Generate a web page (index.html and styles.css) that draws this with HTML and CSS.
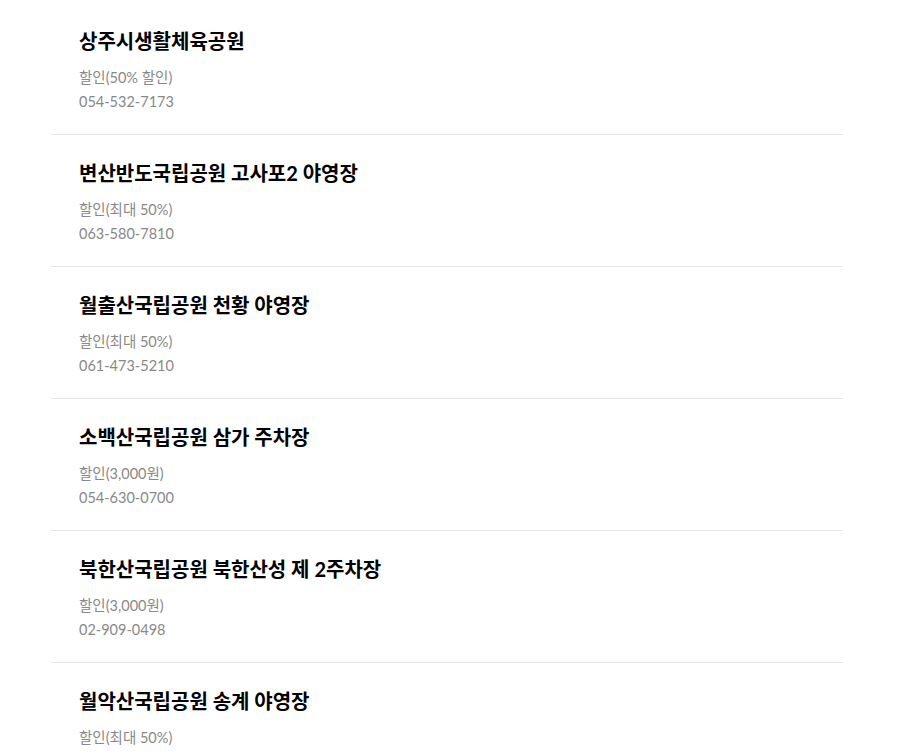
FILE: index.html
```html
<!DOCTYPE html>
<html lang="ko">
<head>
<meta charset="utf-8">
<link rel="stylesheet" href="styles.css">
</head>
<body>
<ul class="list">
  <li class="item">
    <h3 class="title">상주시생활체육공원</h3>
    <p class="info">할인(50% 할인)</p>
    <p class="info">054-532-7173</p>
  </li>
  <li class="item">
    <h3 class="title">변산반도국립공원 고사포2 야영장</h3>
    <p class="info">할인(최대 50%)</p>
    <p class="info">063-580-7810</p>
  </li>
  <li class="item">
    <h3 class="title">월출산국립공원 천황 야영장</h3>
    <p class="info">할인(최대 50%)</p>
    <p class="info">061-473-5210</p>
  </li>
  <li class="item">
    <h3 class="title">소백산국립공원 삼가 주차장</h3>
    <p class="info">할인(3,000원)</p>
    <p class="info">054-630-0700</p>
  </li>
  <li class="item">
    <h3 class="title">북한산국립공원 북한산성 제 2주차장</h3>
    <p class="info">할인(3,000원)</p>
    <p class="info">02-909-0498</p>
  </li>
  <li class="item">
    <h3 class="title">월악산국립공원 송계 야영장</h3>
    <p class="info">할인(최대 50%)</p>
    <p class="info">043-653-3250</p>
  </li>
</ul>
</body>
</html>
```
FILE: styles.css
```css
html, body {
  margin: 0;
  padding: 0;
  background: #fff;
}
body {
  font-family: Lato, "Noto Sans CJK KR", sans-serif;
}
.list {
  list-style: none;
  margin: 0 0 0 51px;
  padding: 3px 0 0;
  width: 792px;
}
.item {
  padding: 24px 28px 20px;
  border-bottom: 1px solid #e6e6e6;
}
.title {
  margin: 0 0 11px;
  font-size: 20px;
  line-height: 28px;
  font-weight: 700;
  color: #000;
}
.info {
  margin: 0;
  font-size: 14.5px;
  line-height: 24px;
  color: #888;
}
```
